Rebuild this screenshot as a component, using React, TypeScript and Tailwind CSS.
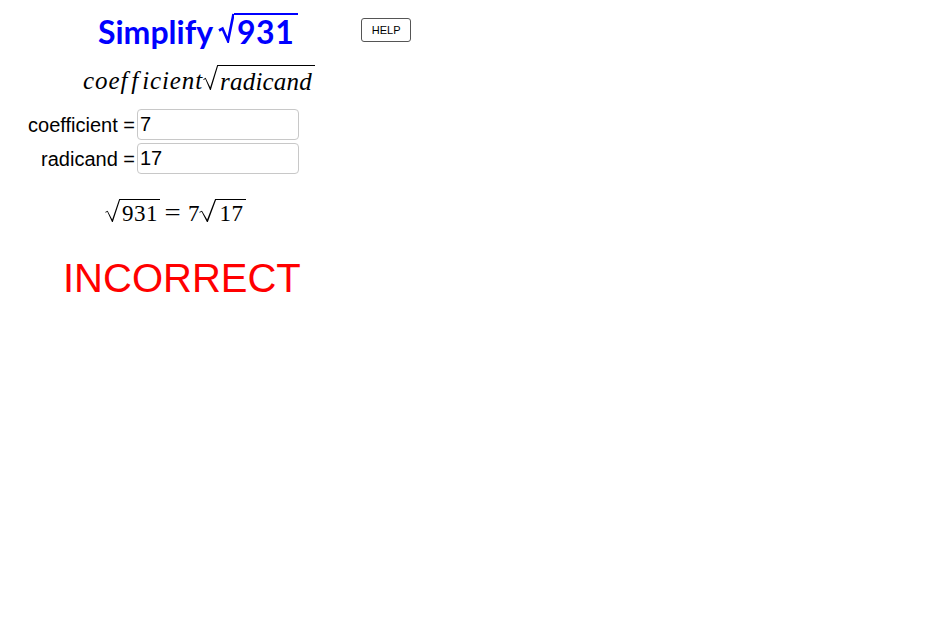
import React, { useState } from "react";

// Simplify radical applet (GeoGebra-style worksheet)

const serif = { fontFamily: "'Liberation Serif', 'Times New Roman', serif" };
const sans = { fontFamily: "'Liberation Sans', Arial, sans-serif" };

// thin TeX-like radical sign
function RadicalSign({ w, h }: { w: number; h: number }) {
  return (
    <svg width={w} height={h} viewBox="0 0 15 24" preserveAspectRatio="none" className="shrink-0">
      <path d="M0.3 13.6 L2.6 12.2 L7.2 21.4 L14.2 0 L15 0 L15 1 L7.8 24 L7 24 L2.3 13.4 L0.6 14.3 Z" fill="currentColor" />
    </svg>
  );
}

function Radical({ children, w, h }: { children: React.ReactNode; w: number; h: number }) {
  return (
    <span className="inline-flex items-start">
      <RadicalSign w={w} h={h} />
      <span className="border-t border-current leading-none" style={{ height: h }}>
        {children}
      </span>
    </span>
  );
}

export default function App() {
  const [coefficient, setCoefficient] = useState("7");
  const [radicand, setRadicand] = useState("17");

  const correct = coefficient === "7" && radicand === "19";

  return (
    <div className="w-[951px] h-[625px] bg-white overflow-hidden text-black">
      {/* Title + help */}
      <div className="flex items-start pt-[13px] h-[65px]">
        <div
          className="ml-[98px] flex items-start text-[#0000ff] font-bold text-[32px] leading-none"
          style={{ fontFamily: "Lato, sans-serif" }}
        >
          <span className="mt-[3px]">Simplify</span>
          <svg width="16" height="30" viewBox="0 0 16 30" className="ml-[5px] shrink-0">
            <path d="M1 17.5 L4.5 15.5 L10 28 L15.5 1" fill="none" stroke="currentColor" strokeWidth="2.6" strokeLinejoin="miter" />
          </svg>
          <span className="border-t-2 border-[#0000ff] h-[30px] pl-[3px] pr-[4px] pt-[1px] tracking-[0.5px]">931</span>
        </div>
        <button
          className="ml-[63px] mt-[5px] w-[50px] h-[24px] border border-[#555] rounded-[3px] bg-white text-[11px] leading-none"
          style={sans}
        >
          HELP
        </button>
      </div>

      {/* General form */}
      <div className="ml-[83px] text-[25px] leading-none flex items-start" style={serif}>
        <span className="italic mt-[3px] tracking-[0.9px] [font-variant-ligatures:none]">
          coe<span className="mr-[3px]">f</span><span className="mr-[3px]">f</span>icient
        </span>
        <Radical w={15} h={25}>
          <span className="italic inline-block mt-[3px] pl-[2px] pr-[3px] tracking-[0.2px]">radicand</span>
        </Radical>
      </div>

      {/* Inputs */}
      <div className="mt-[16px] grid grid-cols-[137px_162px] gap-y-[3px] text-[20px]" style={sans}>
        <label className="text-right pr-[2px] self-center">coefficient =</label>
        <input
          value={coefficient}
          onChange={(e) => setCoefficient(e.target.value)}
          className="h-[31px] border border-[#c8c8c8] rounded-[4px] px-[2px] outline-none"
        />
        <label className="text-right pr-[2px] self-center">radicand =</label>
        <input
          value={radicand}
          onChange={(e) => setRadicand(e.target.value)}
          className="h-[31px] border border-[#c8c8c8] rounded-[4px] px-[2px] outline-none"
        />
      </div>

      {/* Result equation */}
      <div className="ml-[105px] mt-[25px] text-[23px] leading-none flex items-start" style={serif}>
        <Radical w={15} h={23}>
          <span className="inline-block mt-[2px] px-[2px] tracking-[0.5px]">931</span>
        </Radical>
        <span className="ml-[6px] mr-[8px] mt-[2px] scale-x-125">=</span>
        <span className="mt-[3px] ml-[1px]">{coefficient}</span>
        <Radical w={17} h={23}>
          <span className="inline-block mt-[2px] px-[3px] tracking-[0.5px]">{radicand}</span>
        </Radical>
      </div>

      {/* Feedback */}
      <div
        className={`ml-[63px] mt-[33px] text-[40px] leading-none ${correct ? "text-[#008000]" : "text-[#ff0000]"}`}
        style={sans}
      >
        {correct ? "CORRECT" : "INCORRECT"}
      </div>
    </div>
  );
}
